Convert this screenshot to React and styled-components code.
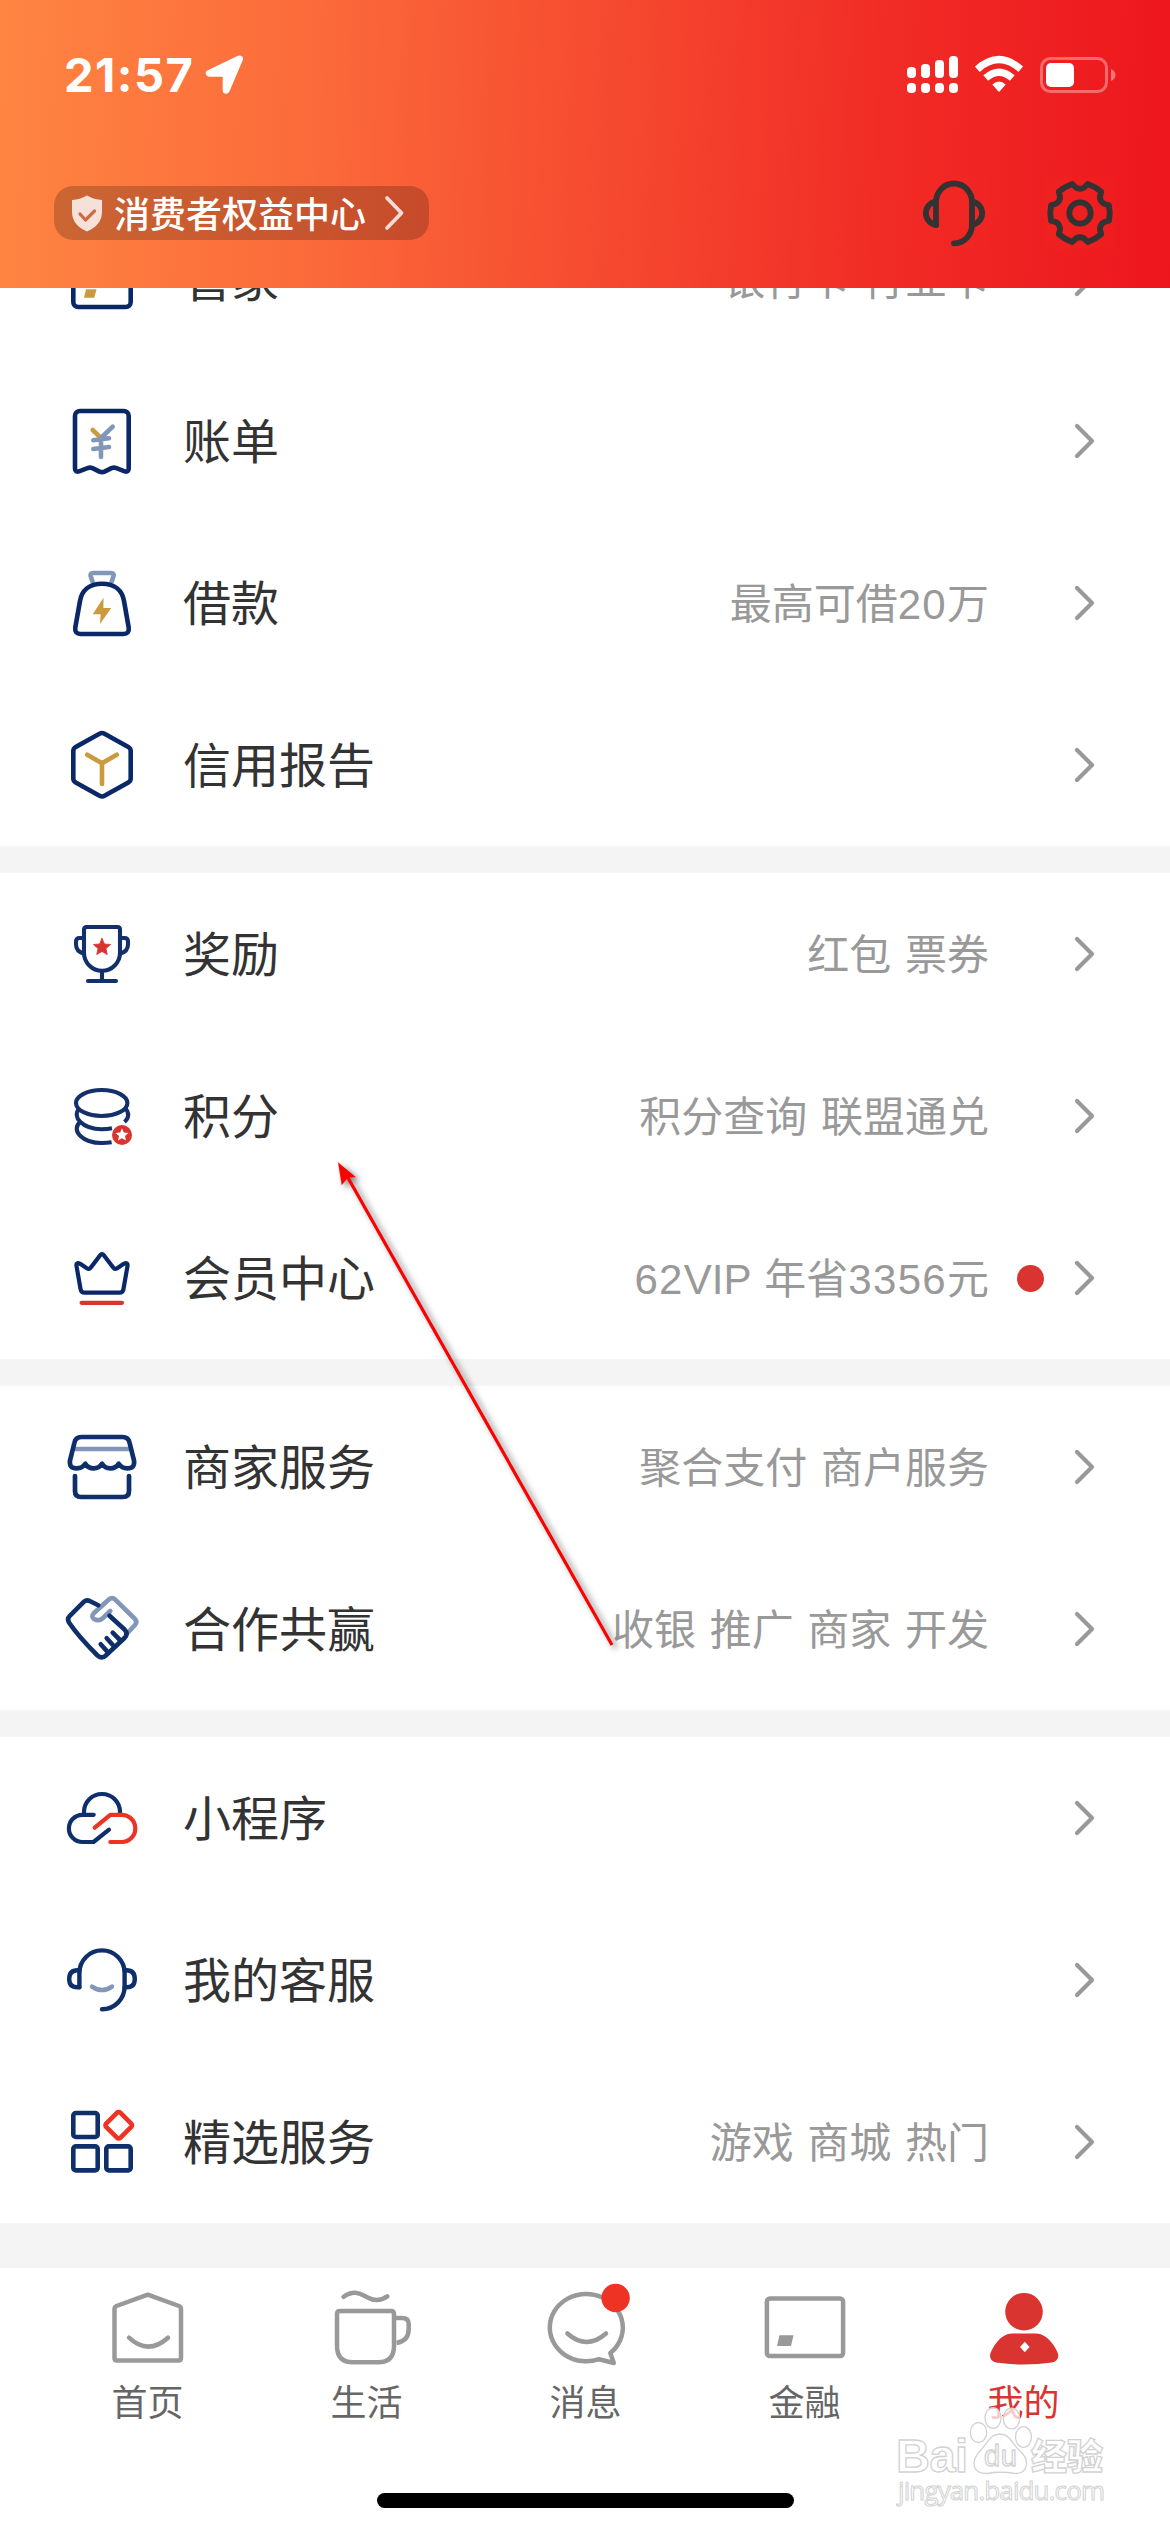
import React from "react";
import styled, { createGlobalStyle } from "styled-components";

const NAVY = "#0f2f6b";
const MIST = "#8296b8";
const GOLD = "#cb9a3f";
const RED = "#d9342f";
const BRIGHT = "#ee3224";

const GlobalStyle = createGlobalStyle`
  * { box-sizing: border-box; }
  body {
    margin: 0;
    background: #fff;
    font-family: "Liberation Sans", "Noto Sans CJK SC", sans-serif;
  }
`;

const Screen = styled.div`
  position: relative;
  display: flex;
  flex-direction: column;
  width: 1170px;
  height: 2532px;
  overflow: hidden;
  background: #fff;
`;

const Header = styled.header`
  display: flex;
  flex-direction: column;
  flex: none;
  height: 288px;
  background: linear-gradient(92deg, #ff8542 0%, #fb6a3a 27%, #f64c30 50%, #f12c26 75%, #ed161d 100%);
`;

const StatusBar = styled.div`
  display: flex;
  align-items: center;
  justify-content: space-between;
  height: 149px;
  padding: 0 54px 0 64px;
`;

const StatusGroup = styled.div`
  display: flex;
  align-items: center;
  gap: ${(p) => p.$gap}px;
`;

const Clock = styled.span`
  width: 129px;
  font: 700 47px/56px Inter, sans-serif;
  letter-spacing: 1.5px;
  white-space: nowrap;
  color: #fff;
`;

const TopBar = styled.div`
  display: flex;
  align-items: center;
  justify-content: space-between;
  height: 128px;
  padding: 0 54px;
`;

const RightsPill = styled.button`
  display: flex;
  align-items: center;
  width: 375px;
  height: 54px;
  padding: 0 25px 0 18px;
  border: 0;
  border-radius: 19px;
  background: rgba(0, 0, 0, 0.2);
  color: #fff;
  font: 500 36px/54px "Noto Sans CJK SC", sans-serif;
  white-space: nowrap;
`;

const PillText = styled.span`
  flex: 1;
  margin-left: 12px;
  padding-bottom: 3px;
  text-align: left;
`;

const Actions = styled.div`
  display: flex;
  gap: 54px;
`;

const ActionButton = styled.button`
  width: 72px;
  height: 72px;
  padding: 0;
  border: 0;
  background: rgba(250, 50, 40, 0.13);
`;

const Scroller = styled.main`
  display: flex;
  flex-direction: column;
  flex: none;
  gap: 27px;
  height: 1980px;
  overflow: hidden;
  background: #f4f4f4;
`;

const Group = styled.section`
  flex: none;
  background: #fff;
  margin-top: ${(p) => (p.$scrolled ? "-90px" : "0")};
`;

const Row = styled.div`
  display: flex;
  align-items: center;
  height: 162px;
  padding: 0 75px 0 66px;
`;

const Glyph = styled.svg.attrs({ fill: "none", strokeLinecap: "round", strokeLinejoin: "round" })`
  display: block;
  flex: none;
  overflow: visible;
  width: ${(p) => p.$w}px;
  height: ${(p) => p.$h || p.$w}px;
`;

const Label = styled.span`
  flex: 1;
  margin-left: 45px;
  padding-top: 3px;
  font-size: 48px;
  line-height: 72px;
  color: #333;
`;

const Hint = styled.span`
  padding-top: 4px;
  font-size: 42px;
  line-height: 62px;
  white-space: pre;
  word-spacing: 2px;
  color: #999;
`;

const Latin = styled.span`
  letter-spacing: ${(p) => (p.$digits ? 1.3 : 0)}px;
`;

const DotSlot = styled.div`
  display: flex;
  width: 84px;
  padding-left: 28px;
`;

const Dot = styled.span`
  width: 27px;
  height: 27px;
  border-radius: 50%;
  background: ${RED};
`;

const TabBar = styled.nav`
  display: flex;
  flex: none;
  height: 225px;
  padding: 12px 37px 0 38px;
  background: #fff;
`;

const Tab = styled.div`
  display: flex;
  flex: 1;
  flex-direction: column;
  align-items: center;
`;

const TabLabel = styled.span`
  padding-top: 1px;
  font-size: 36px;
  line-height: 54px;
  color: ${(p) => (p.$active ? RED : "#666")};
`;

const HomeIndicator = styled.div`
  flex: none;
  align-self: center;
  width: 417px;
  height: 15px;
  border-radius: 8px;
  background: #000;
`;

const Pointer = styled.svg`
  position: absolute;
  left: 320px;
  top: 1140px;
  width: 320px;
  height: 520px;
  filter: drop-shadow(4px 3px 3px rgba(0, 0, 0, 0.5));
`;

const Watermark = styled.svg`
  position: absolute;
  left: 890px;
  top: 2400px;
  width: 230px;
  height: 120px;
`;

const starPoints = (cx, cy, r, inner = 0.46) =>
  Array.from({ length: 10 }, (_, i) => {
    const a = (Math.PI / 5) * i - Math.PI / 2;
    const d = i % 2 ? r * inner : r;
    return `${(cx + d * Math.cos(a)).toFixed(2)},${(cy + d * Math.sin(a)).toFixed(2)}`;
  }).join(" ");

const gearPath = (() => {
  const at = (deg, r) => {
    const a = (deg * Math.PI) / 180;
    return `${(36 + r * Math.sin(a)).toFixed(2)} ${(36 - r * Math.cos(a)).toFixed(2)}`;
  };
  let d = "";
  for (let k = 0; k < 6; k += 1) {
    const n = k * 60;
    d += `${k ? "L" : "M"}${at(n - 15, 30)}L${at(n - 12.5, 28)}A7.5 7.5 0 0 0 ${at(n + 12.5, 28)}L${at(n + 15, 30)}Q${at(n + 30, 30.5)} ${at(n + 45, 30)}`;
  }
  return `${d}z`;
})();

const rowIcons = {
  card: (
    <g>
      <rect x="7.3" y="10" width="57.4" height="54" rx="5" stroke="#0a2768" strokeWidth="4.6" />
      <path d="M20 46.3H30.5L28.3 54.7H18z" fill={GOLD} />
    </g>
  ),
  bill: (
    <g strokeWidth="4.6">
      <path d="M14 6H57.7a5 5 0 0 1 5 5V63.5q0 4-4 2.8L50.5 63.1q-2.5-.9-5 0L38.5 66.6q-2.5 1-5 0L26.5 63.1q-2.5-.9-5 0L13 66.3q-4 1.2-4-2.8V11a5 5 0 0 1 5-5z" stroke="#0a2768" />
      <path d="M26.7 25l6.6 6.3" stroke={GOLD} />
      <path d="M46.7 21.7L35 33V52M27.3 35.3L43 33.3M27.3 44L43 42" stroke={MIST} />
    </g>
  ),
  loan: (
    <g strokeWidth="4.6">
      <path d="M27 16L24.8 9.5Q23.8 6 27.3 6H45Q48.5 6 47.4 9.5L45.2 16" stroke={MIST} strokeLinecap="butt" />
      <path d="M36 16.7C23 16.7 15.7 24 14 34L9.3 60.5Q8.5 67 14.5 67H57.5Q63.5 67 62.7 60.5L58 34C56.3 24 49 16.7 36 16.7z" stroke="#0a2768" />
      <path d="M37.5 30.7L26.7 47.2H34.6L34 57L45.2 41H37.4z" fill={GOLD} />
    </g>
  ),
  credit: (
    <g strokeWidth="4.6">
      <path d="M33.5 4.7Q36 3.4 38.5 4.7L62.3 18Q64.7 19.4 64.7 22V49.6Q64.7 52.2 62.3 53.6L38.5 66.8Q36 68.2 33.5 66.8L9.7 53.6Q7.3 52.2 7.3 49.6V22Q7.3 19.4 9.7 18z" stroke="#0a2768" />
      <path d="M21.3 25.7L36 34.3L50.7 25.7M36 34.3V55" stroke={GOLD} />
    </g>
  ),
  award: (
    <g strokeWidth="4.1" stroke="#14306a">
      <path d="M20.5 9H51.5Q54 9 54 11.5V34.7A18 18 0 0 1 18 34.7V11.5Q18 9 20.5 9z" />
      <path d="M18 20H13.5Q10 20 10 23.5V26.5Q10 33.5 18 35.7M54 20H58.5Q62 20 62 23.5V26.5Q62 33.5 54 35.7M36 53V63M22 63H50" />
      <polygon points={starPoints(36, 29.3, 9)} fill={RED} stroke={RED} strokeWidth="0.8" />
    </g>
  ),
  points: (
    <g strokeWidth="4.1" stroke="#14306a" strokeLinecap="butt">
      <ellipse cx="35.7" cy="23" rx="25.7" ry="13" />
      <path d="M13.5 28.5C5 37 17 49.3 35.7 49.3Q41 49.3 46 48.3M59.5 28.5C63.5 33 63 38 58.5 42M13.5 42.5C5 51 17 63 35.7 63Q41 63 45.6 62.2" />
      <circle cx="56" cy="55" r="10" fill={RED} stroke="none" />
      <polygon points={starPoints(56, 55, 6.8)} fill="#fff" stroke="none" />
    </g>
  ),
  crown: (
    <g strokeWidth="4.2">
      <path d="M34 13.4Q36 10.9 38 13.4L47.2 25.6Q48.8 27.8 51.2 26.3L57.4 22.1Q62.2 19.6 61.5 24L57.4 47.4Q56.8 50.7 53.4 50.7H18.6Q15.2 50.7 14.6 47.4L10.5 24Q9.8 19.6 14.6 22.1L20.8 26.3Q23.2 27.8 24.8 25.6z" stroke="#0a2768" />
      <path d="M15.6 60.8H56" stroke={RED} />
    </g>
  ),
  shop: (
    <g strokeWidth="4.7" stroke={NAVY}>
      <path d="M9 18H63.5" stroke={MIST} strokeLinecap="butt" />
      <path d="M15.5 6H56.5Q62.3 6 63.5 11.5L68 29.5Q69.3 37.4 61.2 37.4Q55.8 37.4 52.7 32.8Q50 37.4 44.3 37.4Q38.9 37.4 36 32.8Q33.1 37.4 27.7 37.4Q22 37.4 19.3 32.8Q16.2 37.4 10.8 37.4Q2.7 37.4 4 29.5L8.5 11.5Q9.7 6 15.5 6z" />
      <path d="M9 45V60Q9 66 15 66H57Q63 66 63 60V45" />
    </g>
  ),
  hands: (
    <g strokeWidth="4.6" stroke={NAVY}>
      <path d="M62 39.5L69 32Q71.6 28.8 69 26L49.5 6.8Q46 3.6 42.5 6.8L27.5 20.5Q24.8 23.5 28 26Q32.8 28.8 37 25L44.3 18" stroke={MIST} />
      <path d="M32.3 12.3L24.2 8.2Q20.8 6.2 18 8.7L3.8 22.8Q.8 26 3 29.5Q12 43 31.5 62.5Q36 66.3 40 62.3L58.5 45Q62.5 40.5 58.8 36.8L43.5 22.8" />
      <path d="M34.7 51.3L41 58.3M40.7 45.3L47.3 52.5M46.7 39.7L54 47" />
    </g>
  ),
  cloud: (
    <g strokeWidth="4.2" stroke={NAVY}>
      <path d="M18 31.5V30A18 18 0 0 1 54 30V31.5" strokeLinecap="butt" />
      <path d="M27.7 32.8H16.5A13.6 13.6 0 0 0 16.5 60H27.5L43 47.7" />
      <path d="M28.7 45.7L44.3 32.8H55.7A13.6 13.6 0 0 1 55.7 60H44.3" stroke={BRIGHT} />
    </g>
  ),
  support: (
    <g strokeWidth="4.4" stroke={NAVY}>
      <path d="M13.4 43V29A22.6 22.6 0 0 1 58.6 29V42.5A22.6 22.8 0 0 1 36 65.3" />
      <path d="M13.4 26.3H11.5Q3.2 26.3 3.2 35Q3.2 43.3 11.5 43.3H13.4M58.6 26.3H60.5Q68.8 26.3 68.8 35Q68.8 43.3 60.5 43.3H58.6" />
      <path d="M26 42.6Q36 49.6 46 42.6" stroke={MIST} />
    </g>
  ),
  services: (
    <g strokeWidth="4.6" stroke={NAVY}>
      <rect x="7.3" y="7" width="24.4" height="24" rx="2.6" />
      <rect x="7.3" y="40.4" width="24.4" height="24" rx="2.6" />
      <rect x="40.3" y="40.4" width="24.4" height="24" rx="2.6" />
      <rect x="42.7" y="9.3" width="20" height="20" rx="2.2" transform="rotate(45 52.7 19.3)" stroke={BRIGHT} />
    </g>
  ),
};

const tabIcons = {
  home: (
    <g stroke="#999" strokeWidth="4.5">
      <path d="M47.8 14.7L79 26Q81 27 81 29V78Q81 80.6 78.5 80.6H17Q14.500 80.6 14.500 78V29Q14.500 27 16.500 26z" />
      <path d="M29 57.700Q48 75.500 68 57.700" />
    </g>
  ),
  life: (
    <g stroke="#999" strokeWidth="4.5">
      <path d="M24.5 16.8C36 9 42 14.5 48 17.2C54 20.5 61 21.5 68.3 16.3" />
      <path d="M21 31H72Q75 31 75 34V66Q75 82.3 59 82.3H34Q18 82.3 18 66V34Q18 31 21 31z" />
      <path d="M77 38H83Q89.7 38 89.7 44V49Q89.7 61 77.5 63" strokeLinecap="butt" />
    </g>
  ),
  message: (
    <g stroke="#999" strokeWidth="4.5">
      <path d="M72.3 73A36.5 33.7 0 1 0 61 79.2L75.8 83z" />
      <path d="M29.4 53.5Q48.5 70.5 68 53.5" />
      <circle cx="77.6" cy="18" r="14.2" fill={BRIGHT} stroke="none" />
    </g>
  ),
  finance: (
    <g>
      <rect x="9.9" y="18.5" width="76.2" height="57.6" rx="3" stroke="#999" strokeWidth="4.5" />
      <path d="M22.5 55.3H36.6L34 66H20z" fill="#999" />
    </g>
  ),
  mine: (
    <g fill={RED}>
      <circle cx="48" cy="31.7" r="18.8" />
      <path d="M36 53.6H60C73 53.6 82.3 72 82.3 75.5Q82.3 81 76 82.5Q48 86.6 20 82.5Q14 81 14 75.5C14 72 23 53.6 36 53.6z" />
      <path d="M48.8 61.8L53.6 67L48.8 72.2L44 67z" fill="#fff" />
    </g>
  ),
};

const groups = [
  [
    { icon: "card", label: "管家", hint: "银行卡 行业卡" },
    { icon: "bill", label: "账单" },
    { icon: "loan", label: "借款", hint: "最高可借20万" },
    { icon: "credit", label: "信用报告" },
  ],
  [
    { icon: "award", label: "奖励", hint: "红包 票券" },
    { icon: "points", label: "积分", hint: "积分查询 联盟通兑" },
    { icon: "crown", label: "会员中心", hint: "62VIP 年省3356元", dot: true },
  ],
  [
    { icon: "shop", label: "商家服务", hint: "聚合支付 商户服务" },
    { icon: "hands", label: "合作共赢", hint: "收银 推广 商家 开发" },
  ],
  [
    { icon: "cloud", label: "小程序" },
    { icon: "support", label: "我的客服" },
    { icon: "services", label: "精选服务", hint: "游戏 商城 热门" },
  ],
];

const tabs = [
  { icon: "home", label: "首页" },
  { icon: "life", label: "生活" },
  { icon: "message", label: "消息" },
  { icon: "finance", label: "金融" },
  { icon: "mine", label: "我的", active: true },
];

const HintText = ({ text }) => (
  <Hint>
    {text.split(/([0-9]+|[A-Z]+)/).map((part, i) =>
      i % 2 ? <Latin key={i} $digits={/\d/.test(part)}>{part}</Latin> : part
    )}
  </Hint>
);

const MenuRow = ({ icon, label, hint, dot }) => (
  <Row>
    <Glyph $w={72} viewBox="0 0 72 72">{rowIcons[icon]}</Glyph>
    <Label>{label}</Label>
    {hint && <HintText text={hint} />}
    <DotSlot>{dot && <Dot />}</DotSlot>
    <Glyph $w={22} $h={40} viewBox="0 0 22 40">
      <path d="M4 5L19 20L4 35" stroke="#999" strokeWidth="4.2" />
    </Glyph>
  </Row>
);

const SignalIcon = () => (
  <Glyph $w={51} $h={38} viewBox="0 0 51 38">
    <g fill="#fff">
      {[11, 8, 4, 0].map((y, i) => (
        <React.Fragment key={i}>
          <rect x={i * 14} y={y} width="9" height={22 - y} rx="4" />
          <rect x={i * 14} y="27" width="9" height="10" rx="4" />
        </React.Fragment>
      ))}
    </g>
  </Glyph>
);

const WifiIcon = () => (
  <Glyph $w={48} $h={38} viewBox="0 0 48 38">
    <g stroke="#fff" strokeWidth="7.2" strokeLinecap="butt">
      <path d="M2.3 13.2Q24-6 45.7 13.2" />
      <path d="M10.7 22Q24 10.4 37.3 22" />
    </g>
    <path d="M17.3 28.4Q24 22.8 30.7 28.4L24.8 35.3Q24 36.2 23.2 35.3z" fill="#fff" />
  </Glyph>
);

const BatteryIcon = () => (
  <Glyph $w={76} $h={38} viewBox="0 0 76 38">
    <rect x="1.5" y="2.5" width="65" height="33" rx="9" stroke="#fff" strokeOpacity=".35" strokeWidth="3" />
    <rect x="6" y="7" width="28" height="24" rx="5" fill="#fff" />
    <path d="M71 13Q75.5 15 75.5 19Q75.5 23 71 25z" fill="#fff" fillOpacity=".4" />
  </Glyph>
);

export default function App() {
  return (
    <>
      <GlobalStyle />
      <Screen>
        <Header>
          <StatusBar>
            <StatusGroup $gap={12}>
              <Clock>21:57</Clock>
              <Glyph $w={39} $h={40} viewBox="0 0 39 40">
                <path d="M34.5 4L4.3 18.3H21.2V35.2z" fill="#fff" stroke="#fff" strokeWidth="7" />
              </Glyph>
            </StatusGroup>
            <StatusGroup $gap={17}>
              <SignalIcon />
              <WifiIcon />
              <BatteryIcon />
            </StatusGroup>
          </StatusBar>
          <TopBar>
            <RightsPill>
              <Glyph $w={30} $h={37} viewBox="0 0 30 37">
                <path d="M15 .5Q22 4.5 30 5V17Q30 30 15 36.5Q0 30 0 17V5Q8 4.5 15 .5z" fill="#f6e1d8" />
                <path d="M8 19L13.5 25L22.5 16" stroke="#cd6a42" strokeWidth="3.2" />
              </Glyph>
              <PillText>消费者权益中心</PillText>
              <Glyph $w={20} $h={36} viewBox="0 0 20 36">
                <path d="M3 3L17.5 18L3 33" stroke="#f4dcd6" strokeWidth="3.8" />
              </Glyph>
            </RightsPill>
            <Actions>
              <ActionButton aria-label="客服">
                <Glyph $w={72} viewBox="0 0 72 72">
                  <g stroke="#333" strokeWidth="5.8">
                    <path d="M18 48V25A18 18.5 0 0 1 54 25V48A18 18.3 0 0 1 36 66.3" />
                    <path d="M18 24.3A12 12 0 0 0 18 48M54 24.3A12 12 0 0 1 54 48" />
                  </g>
                </Glyph>
              </ActionButton>
              <ActionButton aria-label="设置">
                <Glyph $w={72} viewBox="0 0 72 72">
                  <g stroke="#333" strokeWidth="5.8">
                    <path d={gearPath} />
                    <circle cx="36" cy="36" r="10.7" />
                  </g>
                </Glyph>
              </ActionButton>
            </Actions>
          </TopBar>
        </Header>

        <Scroller>
          {groups.map((rows, i) => (
            <Group key={i} $scrolled={i === 0}>
              {rows.map((row) => (
                <MenuRow key={row.label} {...row} />
              ))}
            </Group>
          ))}
        </Scroller>

        <TabBar>
          {tabs.map((tab) => (
            <Tab key={tab.label}>
              <Glyph $w={96} viewBox="0 0 96 96">{tabIcons[tab.icon]}</Glyph>
              <TabLabel $active={tab.active}>{tab.label}</TabLabel>
            </Tab>
          ))}
        </TabBar>
        <HomeIndicator />

        <Pointer viewBox="0 0 320 520">
          <path d="M27 36L292 505" stroke="#fd0000" strokeWidth="3.2" />
          <path d="M18 22.3L36 37.3L28 37.5L21.7 45.3z" fill="#fd0000" />
        </Pointer>

        <Watermark viewBox="0 0 230 120">
          <g fill="#fff" fillOpacity=".75" stroke="#d2d2d2" strokeWidth="1.3">
            <text x="6" y="72" fontFamily="Liberation Sans, sans-serif" fontWeight="700" fontSize="47" textLength="72">Bai</text>
            <ellipse cx="88.5" cy="32.5" rx="8.2" ry="10" />
            <ellipse cx="103" cy="18" rx="8" ry="10.3" />
            <ellipse cx="121.5" cy="18.5" rx="8.2" ry="10.3" />
            <ellipse cx="133.5" cy="37" rx="8" ry="10.3" />
            <path d="M110 34C120 34 122 44 130 51C141 61 137 74 125 73.5C116 72 105 72 97 73.5C83 74 80 62 90 51C98 43 100 34 110 34z" />
            <text x="94" y="66" fontFamily="Liberation Sans, sans-serif" fontSize="29" textLength="33">du</text>
            <text x="141" y="70" fontFamily="Noto Sans CJK SC, sans-serif" fontWeight="900" fontSize="36">经验</text>
            <text x="8" y="100" fontFamily="Open Sans, sans-serif" fontSize="26" textLength="207" strokeWidth="1">jingyan.baidu.com</text>
          </g>
        </Watermark>
      </Screen>
    </>
  );
}
